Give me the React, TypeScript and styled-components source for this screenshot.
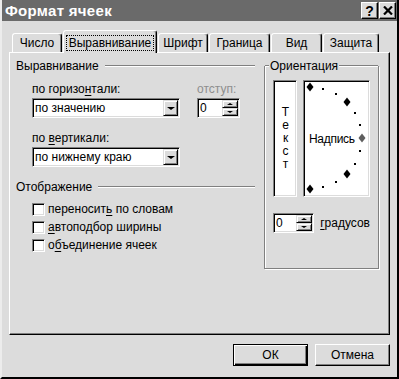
import React from "react";
import styled, { createGlobalStyle, css } from "styled-components";

const BG = "#dcdcdc";
const SHADOW = "#808080";
const FONT = `"Liberation Sans", Arial, sans-serif`;

const GlobalStyle = createGlobalStyle`
  html, body { margin: 0; padding: 0; background: ${BG}; }
  body { font-family: ${FONT}; font-size: 12px; color: #000; }
  #root { width: 399px; height: 379px; overflow: hidden; }
  *, *::before, *::after { box-sizing: border-box; }
  u { text-decoration-thickness: 1px; text-underline-offset: 2px; }
`;

const raised = css`
  background: ${BG};
  border: 1px solid;
  border-color: ${BG} #000 #000 ${BG};
  box-shadow: inset 1px 1px 0 #fff, inset -1px -1px 0 ${SHADOW};
`;

const sunken = css`
  background: #fff;
  border: 1px solid;
  border-color: ${SHADOW} #fff #fff ${SHADOW};
  box-shadow: inset 1px 1px 0 #000, inset -1px -1px 0 ${BG};
`;

const Window = styled.div`
  width: 399px;
  height: 379px;
  background: ${BG};
  border-left: 2px solid #ececec;
  border-right: 2px solid #000;
  border-bottom: 2px solid #000;
  display: flex;
  flex-direction: column;
`;

const TitleBar = styled.div`
  height: 21px;
  flex: none;
  background: #6a6a6a;
  display: flex;
  align-items: center;
  justify-content: space-between;
  padding: 0 1px 0 3px;
`;

const Title = styled.div`
  color: #fff;
  font: bold 15px ${FONT};
  letter-spacing: 0.3px;
`;

const TitleButtons = styled.div`
  display: flex;
  gap: 1px;
`;

const TitleButton = styled.div`
  width: 17px;
  height: 17px;
  ${raised};
  border-color: #fff #000 #000 #fff;
  box-shadow: inset -1px -1px 0 ${SHADOW};
  display: flex;
  align-items: center;
  justify-content: center;
  font: bold 14px ${FONT};
  line-height: 14px;
`;

const Body = styled.div`
  flex: 1;
  display: flex;
  flex-direction: column;
  padding: 9px 7px 0 7px;
`;

const TabRow = styled.div`
  display: flex;
  align-items: flex-end;
  gap: 1px;
  padding-left: 3px;
  height: 22px;
  position: relative;
  z-index: 1;
`;

const Tab = styled.div<{ $w: number; $active?: boolean }>`
  width: ${(p) => p.$w}px;
  height: ${(p) => (p.$active ? 23 : 19)}px;
  margin-bottom: ${(p) => (p.$active ? -1 : 0)}px;
  padding-top: ${(p) => (p.$active ? 2 : 0)}px;
  background: ${BG};
  border: 1px solid;
  border-bottom: none;
  border-color: #fff #000 transparent #fff;
  border-radius: 3px 3px 0 0;
  box-shadow: inset -1px 0 0 ${SHADOW};
  display: flex;
  align-items: center;
  justify-content: center;
  line-height: 14px;
`;

const FocusRect = styled.span`
  border: 1px dotted #000;
  padding: 0 2px;
  line-height: 14px;
`;

const Panel = styled.div`
  width: 381px;
  height: 283px;
  border-top: 1px solid #fff;
  border-left: 1px solid #fff;
  border-right: 1px solid #000;
  border-bottom: 1px solid #000;
  box-shadow: inset -1px -1px 0 ${SHADOW};
  display: flex;
  gap: 9px;
  padding: 6px 0 0 6px;
`;

const LeftColumn = styled.div`
  width: 239px;
  display: flex;
  flex-direction: column;
`;

const GroupHeader = styled.div<{ $mt?: number }>`
  display: flex;
  align-items: center;
  height: 14px;
  line-height: 14px;
  margin-top: ${(p) => p.$mt ?? 0}px;
`;

const Rule = styled.span<{ $w?: number }>`
  height: 2px;
  border-top: 1px solid ${SHADOW};
  border-bottom: 1px solid #fff;
  ${(p) => (p.$w ? `width: ${p.$w}px; flex: none;` : `flex: 1;`)}
`;

const HeaderText = styled.span<{ $pad?: number }>`
  padding: 0 ${(p) => p.$pad ?? 6}px 0 0;
`;

const Indent = styled.div<{ $mt?: number }>`
  padding-left: 16px;
  margin-top: ${(p) => p.$mt ?? 0}px;
  display: flex;
  gap: 17px;
`;

const Field = styled.div`
  display: flex;
  flex-direction: column;
`;

const FieldLabel = styled.div<{ $disabled?: boolean }>`
  height: 14px;
  line-height: 14px;
  margin-bottom: 2px;
  color: ${(p) => (p.$disabled ? "#8e8e8e" : "#000")};
  white-space: nowrap;
`;

const Select = styled.div<{ $w: number }>`
  width: ${(p) => p.$w}px;
  height: 20px;
  ${sunken};
  display: flex;
  align-items: center;
  padding: 1px;
`;

const SelectText = styled.span`
  flex: 1;
  padding-left: 1px;
  line-height: 16px;
  white-space: nowrap;
`;

const ArrowButton = styled.span`
  width: 15px;
  height: 16px;
  ${raised};
  display: flex;
  align-items: center;
  justify-content: center;
`;

const Triangle = styled.span<{ $up?: boolean; $size: number }>`
  width: 0;
  height: 0;
  border-left: ${(p) => p.$size}px solid transparent;
  border-right: ${(p) => p.$size}px solid transparent;
  ${(p) =>
    p.$up
      ? `border-bottom: ${p.$size - 1}px solid #000;`
      : `border-top: ${p.$size - 1}px solid #000;`}
`;

const Spinner = styled.div<{ $w: number }>`
  width: ${(p) => p.$w}px;
  height: 20px;
  ${sunken};
  display: flex;
  padding: 1px;
`;

const SpinnerText = styled.span`
  flex: 1;
  padding-left: 1px;
  line-height: 16px;
`;

const SpinButtons = styled.span`
  width: 16px;
  display: flex;
  flex-direction: column;
`;

const SpinButton = styled.span`
  flex: 1;
  ${raised};
  display: flex;
  align-items: center;
  justify-content: center;
`;

const CheckList = styled.div`
  margin-top: 6px;
  padding-left: 16px;
  display: flex;
  flex-direction: column;
`;

const CheckRow = styled.label`
  height: 18px;
  display: flex;
  align-items: center;
  gap: 3px;
  line-height: 14px;
`;

const CheckBox = styled.span`
  width: 13px;
  height: 13px;
  flex: none;
  ${sunken};
`;

const Frame = styled.div`
  width: 115px;
  margin-top: 7px;
  align-self: flex-start;
  border: 1px solid ${SHADOW};
  border-top: none;
  box-shadow: inset 1px 0 0 #fff, 1px 1px 0 #fff;
  padding: 0 8px 35px 8px;
  display: flex;
  flex-direction: column;
`;

const FrameHeader = styled.div`
  display: flex;
  align-items: center;
  height: 14px;
  line-height: 14px;
  margin: -7px -8px 0 -8px;
`;

const FrameTitle = styled.span`
  background: ${BG};
  padding: 0 1px;
`;

const BoxRow = styled.div`
  margin-top: 7px;
  display: flex;
  gap: 6px;
`;

const VerticalBox = styled.div`
  width: 24px;
  height: 117px;
  ${sunken};
  display: flex;
  flex-direction: column;
  align-items: center;
  justify-content: center;
  line-height: 13px;
  padding-left: 1px;
`;

const DialBox = styled.div`
  flex: 1;
  height: 117px;
  ${sunken};
  position: relative;
  display: flex;
  align-items: center;
  padding-left: 5px;
`;

const DialLabel = styled.span`
  letter-spacing: -0.3px;
`;

const DialSvg = styled.svg`
  position: absolute;
  left: 0;
  top: 0;
  width: 100%;
  height: 100%;
  overflow: visible;
`;

const DegreeRow = styled.div`
  margin-top: 16px;
  display: flex;
  align-items: center;
  gap: 6px;
`;

const ButtonRow = styled.div`
  margin-top: 9px;
  display: flex;
  justify-content: flex-end;
  gap: 7px;
`;

const Button = styled.div<{ $default?: boolean }>`
  width: 75px;
  height: 22px;
  display: flex;
  align-items: center;
  justify-content: center;
  background: ${BG};
  ${(p) =>
    p.$default
      ? `border: 1px solid #000;
         box-shadow: inset 1px 1px 0 #fff, inset -1px -1px 0 #000, inset -2px -2px 0 ${SHADOW};`
      : `border: 1px solid; border-color: #fff #000 #000 #fff;
         box-shadow: inset -1px -1px 0 ${SHADOW};`}
`;

const CloseIcon = () => (
  <svg width="10" height="9" viewBox="0 0 10 9">
    <path d="M1 0.5 L9 8.5 M9 0.5 L1 8.5" stroke="#000" strokeWidth="2.2" />
  </svg>
);

const Diamond = ({ x, y, color }: { x: number; y: number; color: string }) => (
  <polygon
    points={`${x},${y - 4.5} ${x + 3.5},${y} ${x},${y + 4.5} ${x - 3.5},${y}`}
    fill={color}
  />
);

const Dial = () => {
  const cx = 6;
  const cy = 57;
  const rx = 52;
  const ry = 51;
  const items = [];
  for (let a = 90; a >= -90; a -= 15) {
    const r = (a * Math.PI) / 180;
    const x = Math.round(cx + rx * Math.cos(r));
    const y = Math.round(cy - ry * Math.sin(r));
    if (a === 0) items.push(<Diamond key={a} x={x} y={y} color="#5e5e5e" />);
    else if (a % 45 === 0) items.push(<Diamond key={a} x={x} y={y} color="#000" />);
    else items.push(<rect key={a} x={x - 1} y={y - 1} width="2" height="2" fill="#000" />);
  }
  return <DialSvg>{items}</DialSvg>;
};

export default function App() {
  return (
    <>
      <GlobalStyle />
      <Window>
        <TitleBar>
          <Title>Формат ячеек</Title>
          <TitleButtons>
            <TitleButton>?</TitleButton>
            <TitleButton>
              <CloseIcon />
            </TitleButton>
          </TitleButtons>
        </TitleBar>
        <Body>
          <TabRow>
            <Tab $w={50}>Число</Tab>
            <Tab $w={94} $active>
              <FocusRect>Выравнивание</FocusRect>
            </Tab>
            <Tab $w={50}>Шрифт</Tab>
            <Tab $w={61}>Граница</Tab>
            <Tab $w={51}>Вид</Tab>
            <Tab $w={56}>Защита</Tab>
          </TabRow>
          <Panel>
            <LeftColumn>
              <GroupHeader>
                <HeaderText>Выравнивание</HeaderText>
                <Rule />
              </GroupHeader>
              <Indent $mt={9}>
                <Field>
                  <FieldLabel>
                    по горизо<u>н</u>тали:
                  </FieldLabel>
                  <Select $w={148}>
                    <SelectText>по значению</SelectText>
                    <ArrowButton>
                      <Triangle $size={4} />
                    </ArrowButton>
                  </Select>
                </Field>
                <Field>
                  <FieldLabel $disabled>отступ:</FieldLabel>
                  <Spinner $w={43}>
                    <SpinnerText>0</SpinnerText>
                    <SpinButtons>
                      <SpinButton>
                        <Triangle $up $size={3} />
                      </SpinButton>
                      <SpinButton>
                        <Triangle $size={3} />
                      </SpinButton>
                    </SpinButtons>
                  </Spinner>
                </Field>
              </Indent>
              <Indent $mt={13}>
                <Field>
                  <FieldLabel>
                    по <u>в</u>ертикали:
                  </FieldLabel>
                  <Select $w={148}>
                    <SelectText>по нижнему краю</SelectText>
                    <ArrowButton>
                      <Triangle $size={4} />
                    </ArrowButton>
                  </Select>
                </Field>
              </Indent>
              <GroupHeader $mt={13}>
                <HeaderText>Отображение</HeaderText>
                <Rule />
              </GroupHeader>
              <CheckList>
                <CheckRow>
                  <CheckBox />
                  <span>
                    переносит<u>ь</u> по словам
                  </span>
                </CheckRow>
                <CheckRow>
                  <CheckBox />
                  <span>
                    <u>а</u>втоподбор ширины
                  </span>
                </CheckRow>
                <CheckRow>
                  <CheckBox />
                  <span>
                    о<u>б</u>ъединение ячеек
                  </span>
                </CheckRow>
              </CheckList>
            </LeftColumn>
            <Frame>
              <FrameHeader>
                <Rule $w={4} />
                <FrameTitle>Ориентация</FrameTitle>
                <Rule />
              </FrameHeader>
              <BoxRow>
                <VerticalBox>
                  <span>Т</span>
                  <span>е</span>
                  <span>к</span>
                  <span>с</span>
                  <span>т</span>
                </VerticalBox>
                <DialBox>
                  <Dial />
                  <DialLabel>Надпись</DialLabel>
                </DialBox>
              </BoxRow>
              <DegreeRow>
                <Spinner $w={44}>
                  <SpinnerText>0</SpinnerText>
                  <SpinButtons>
                    <SpinButton>
                      <Triangle $up $size={3} />
                    </SpinButton>
                    <SpinButton>
                      <Triangle $size={3} />
                    </SpinButton>
                  </SpinButtons>
                </Spinner>
                <span>
                  <u>г</u>радусов
                </span>
              </DegreeRow>
            </Frame>
          </Panel>
          <ButtonRow>
            <Button $default>ОК</Button>
            <Button>Отмена</Button>
          </ButtonRow>
        </Body>
      </Window>
    </>
  );
}
